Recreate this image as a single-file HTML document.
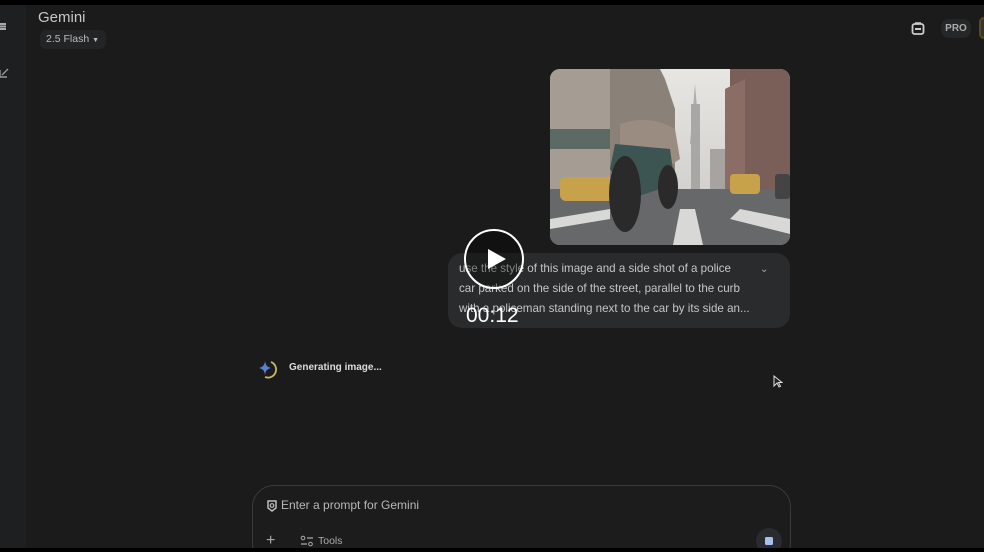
<!DOCTYPE html>
<html style="width:984px;height:552px;overflow:hidden"><head><meta charset="utf-8"><style>
*{margin:0;padding:0;box-sizing:border-box}
body{width:984px;height:552px;background:#1b1b1b;font-family:"Liberation Sans",sans-serif;position:relative;overflow:hidden}
.abs{position:absolute}
</style></head><body>
<div class="abs" style="left:0;top:0;width:26px;height:552px;background:#1e1f20"></div>
<div class="abs" style="left:0;top:23px;width:6px;height:1.5px;background:#aaa;box-shadow:0 2.5px 0 #aaa,0 5px 0 #aaa"></div>
<svg class="abs" style="left:0;top:67px" width="10" height="12"><path d="M0 3 v7 h7 M2 8 l6-6" stroke="#999" stroke-width="1.4" fill="none"/></svg>
<div class="abs" style="left:38px;top:9px;color:#c8c8c8;font-size:15px">Gemini</div>
<div class="abs" style="left:40px;top:30px;width:66px;height:19px;background:#232425;border-radius:6px;color:#bbb;font-size:10.5px;line-height:19px;padding-left:6px">2.5 Flash <span style="font-size:7px">▼</span></div>
<svg class="abs" style="left:911px;top:21px" width="14" height="14"><rect x="1.5" y="3" width="11" height="10" rx="2" fill="none" stroke="#ccc" stroke-width="1.8"/><rect x="4" y="7" width="6" height="2" fill="#ccc"/><path d="M4 2 h6" stroke="#ccc" stroke-width="1.5"/></svg>
<div class="abs" style="left:941px;top:19px;width:30px;height:19px;background:#262728;border-radius:8px;color:#aaa;font-size:10px;font-weight:bold;line-height:19px;text-align:center">PRO</div>
<div class="abs" style="left:979px;top:17px;width:10px;height:22px;border-radius:11px;border:2px solid #5a4a20;background:#333"></div>

<svg class="abs" style="left:550px;top:69px" width="240" height="176" viewBox="0 0 240 176">
<defs><clipPath id="c"><rect width="240" height="176" rx="10"/></clipPath>
<linearGradient id="sky" x1="0" y1="0" x2="0" y2="1"><stop offset="0" stop-color="#e8e6e2"/><stop offset="1" stop-color="#c9c8c5"/></linearGradient></defs>
<g clip-path="url(#c)">
<rect width="240" height="176" fill="url(#sky)"/>
<path d="M0 0 H110 L115 10 L125 40 V125 H0Z" fill="#8a8278"/>
<path d="M0 0 H60 V120 H0Z" fill="#a59d93"/>
<path d="M0 60 H60 V80 H0Z" fill="#5c6a66"/>
<path d="M140 75 L145 15 L150 75Z" fill="#b0aca8"/>
<rect x="141" y="35" width="9" height="95" fill="#a9a7a5"/>
<rect x="160" y="80" width="30" height="50" fill="#a7a3a0"/>
<path d="M180 0 H240 V125 H180Z" fill="#7a5e58"/>
<path d="M175 20 L195 10 V125 H175Z" fill="#8c6d66"/>
<rect x="0" y="120" width="240" height="56" fill="#66686a"/>
<path d="M0 150 L60 140 V150 L0 160Z M190 140 L240 150 V165 L180 150Z M130 140 h15 l8 36 h-30Z" fill="#d8d8d6"/>
<rect x="10" y="108" width="55" height="24" rx="6" fill="#c8a24a"/>
<rect x="180" y="105" width="30" height="20" rx="4" fill="#c8a24a"/>
<rect x="225" y="105" width="15" height="25" rx="3" fill="#444"/>
<path d="M70 55 Q100 45 125 60 L130 90 L100 110 L70 80Z" fill="#9a8c80"/>
<path d="M65 75 L120 80 L125 115 L80 130 L60 100Z" fill="#3c5552"/>
<ellipse cx="75" cy="125" rx="16" ry="38" fill="#2a2a2a"/>
<ellipse cx="118" cy="118" rx="10" ry="22" fill="#2a2a2a"/>
</g></svg>

<div class="abs" style="left:448px;top:253px;width:342px;height:75px;background:#2a2b2c;border-radius:14px"></div>
<div class="abs" style="left:459px;top:259px;color:#c6c6c6;font-size:11.6px;line-height:20px;white-space:nowrap">use the style of this image and a side shot of a police<br>car parked on the side of the street, parallel to the curb<br>with a policeman standing next to the car by its side an...</div>
<div class="abs" style="left:760px;top:264px;color:#aaa;font-size:10px">⌄</div>
<div class="abs" style="left:464px;top:229px;width:60px;height:60px;border-radius:50%;border:2.5px solid #fff;background:rgba(0,0,0,.35)"></div>
<svg class="abs" style="left:486px;top:247px" width="22" height="24"><path d="M2 2 L20 12 L2 22Z" fill="#fff"/></svg>
<div class="abs" style="left:466px;top:304px;color:#fff;font-size:21px">00:12</div>

<svg class="abs" style="left:256px;top:357px" width="22" height="22"><path d="M9 4 Q9.5 10 15 11 Q9.5 12 9 18 Q8.5 12 3 11 Q8.5 10 9 4Z" fill="#5a7fd8"/><path d="M15 5 A8 8 0 0 1 9 20" stroke="#c8b860" stroke-width="1.8" fill="none"/></svg>
<div class="abs" style="left:289px;top:362px;color:#ddd;font-size:10px;font-weight:bold">Generating image...</div>
<svg class="abs" style="left:773px;top:375px" width="10" height="14"><path d="M1 1 V11 L4 8 L6 12 L7.5 11.3 L5.5 7.5 H9Z" fill="#222" stroke="#ddd" stroke-width="1"/></svg>

<div class="abs" style="left:252px;top:485px;width:539px;height:80px;border:1.5px solid #3a3b3c;border-radius:22px;background:#1c1c1c"></div>
<svg class="abs" style="left:266px;top:499px" width="12" height="13"><path d="M2 2 H10 V9 L6 12 L2 9Z" fill="none" stroke="#bbb" stroke-width="1.5"/><circle cx="6" cy="6.5" r="1.8" fill="none" stroke="#bbb" stroke-width="1.2"/></svg>
<div class="abs" style="left:281px;top:498px;color:#b8b8b8;font-size:12px">Enter a prompt for Gemini</div>
<div class="abs" style="left:266px;top:532px;color:#aaa;font-size:16px">+</div>
<svg class="abs" style="left:300px;top:535px" width="14" height="12"><circle cx="3" cy="3" r="1.8" fill="none" stroke="#aaa"/><path d="M7 3 h6 M1 9 h6" stroke="#aaa" stroke-width="1.3"/><circle cx="10.5" cy="9" r="1.8" fill="none" stroke="#aaa"/></svg>
<div class="abs" style="left:318px;top:535px;color:#aaa;font-size:10.5px">Tools</div>
<div class="abs" style="left:756px;top:528px;width:26px;height:26px;border-radius:50%;background:#2a2b2e"></div>
<div class="abs" style="left:765px;top:537px;width:8px;height:8px;border-radius:1.5px;background:#a8c0f0"></div>
<div class="abs" style="left:0;top:0;width:984px;height:5px;background:#000"></div>
<div class="abs" style="left:0;top:548px;width:984px;height:4px;background:#000"></div>
</body></html>
